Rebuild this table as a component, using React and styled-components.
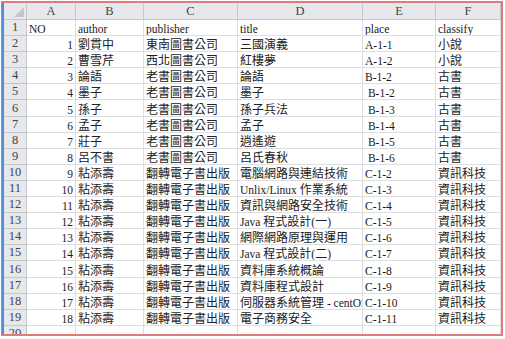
import React from 'react';
import styled, { createGlobalStyle } from 'styled-components';

const GlobalStyle = createGlobalStyle`
  html, body {
    margin: 0;
    padding: 0;
    background: #ffffff;
  }
`;

const Page = styled.div`
  width: 505px;
  height: 339px;
  padding: 1px 0 0 1px;
  box-sizing: border-box;
  overflow: hidden;
`;

const Frame = styled.div`
  width: 502px;
  height: 335px;
  box-sizing: border-box;
  border: 2px solid #e07a7c;
  border-left-width: 1px;
  overflow: hidden;
`;

const Sheet = styled.div`
  height: 100%;
  border-left: 2px solid #4d8fd6;
  display: grid;
  grid-template-columns: 23px 49px 68px 94px 125px 73px 1fr;
  grid-auto-rows: 16.1px;
  grid-template-rows: 17px;
  font-family: 'Liberation Serif', 'Noto Sans CJK TC', serif;
  color: #1a1a1a;
  overflow: hidden;
`;

const HeadCell = styled.div`
  background: #e6e8ec;
  border-right: 1px solid #c4c7cc;
  border-bottom: 1px solid #c4c7cc;
  color: #454545;
  font-size: 12.5px;
  display: flex;
  align-items: center;
  justify-content: center;
  box-sizing: border-box;
  position: relative;
`;

const Corner = styled(HeadCell)`
  &::after {
    content: '';
    position: absolute;
    right: 2px;
    bottom: 2px;
    border-style: solid;
    border-width: 0 0 10px 10px;
    border-color: transparent transparent #c3c6cb transparent;
  }
`;

const RowNum = styled(HeadCell)`
  font-size: 12.5px;
  align-items: flex-end;
  line-height: 15px;
`;

const Cell = styled.div`
  border-right: 1px solid #dcdee1;
  border-bottom: 1px solid #dcdee1;
  box-sizing: border-box;
  display: flex;
  align-items: flex-end;
  justify-content: ${(p) => (p.$num ? 'flex-end' : 'flex-start')};
  padding: 0 2px;
  white-space: pre;
  overflow: hidden;
  line-height: 15px;
  height: 100%;
  background: #ffffff;
`;

const Line = styled.span`
  display: block;
  line-height: 15px;
  height: 15px;
`;

const Latin = styled.span`
  font-family: 'Liberation Serif', serif;
  font-size: 11.5px;
  line-height: 15px;
`;

const Cjk = styled.span`
  font-family: 'Noto Sans CJK TC', sans-serif;
  font-size: 12px;
  line-height: 15px;
  color: #222;
`;

const letters = ['A', 'B', 'C', 'D', 'E', 'F'];

const rows = [
  ['NO', 'author', 'publisher', 'title', 'place', 'classify'],
  ['1', '劉貫中', '東南圖書公司', '三國演義', 'A-1-1', '小說'],
  ['2', '曹雪芹', '西北圖書公司', '紅樓夢', 'A-1-2', '小說'],
  ['3', '論語', '老書圖書公司', '論語', 'B-1-2', '古書'],
  ['4', '墨子', '老書圖書公司', '墨子', ' B-1-2', '古書'],
  ['5', '孫子', '老書圖書公司', '孫子兵法', ' B-1-3', '古書'],
  ['6', '孟子', '老書圖書公司', '孟子', ' B-1-4', '古書'],
  ['7', '莊子', '老書圖書公司', '逍遙遊', ' B-1-5', '古書'],
  ['8', '呂不書', '老書圖書公司', '呂氏春秋', ' B-1-6', '古書'],
  ['9', '粘添壽', '翻轉電子書出版', '電腦網路與連結技術', 'C-1-2', '資訊科技'],
  ['10', '粘添壽', '翻轉電子書出版', 'Unlix/Linux 作業系統', 'C-1-3', '資訊科技'],
  ['11', '粘添壽', '翻轉電子書出版', '資訊與網路安全技術', 'C-1-4', '資訊科技'],
  ['12', '粘添壽', '翻轉電子書出版', 'Java 程式設計(一)', 'C-1-5', '資訊科技'],
  ['13', '粘添壽', '翻轉電子書出版', '網際網路原理與運用', 'C-1-6', '資訊科技'],
  ['14', '粘添壽', '翻轉電子書出版', 'Java 程式設計(二)', 'C-1-7', '資訊科技'],
  ['15', '粘添壽', '翻轉電子書出版', '資料庫系統概論', 'C-1-8', '資訊科技'],
  ['16', '粘添壽', '翻轉電子書出版', '資料庫程式設計', 'C-1-9', '資訊科技'],
  ['17', '粘添壽', '翻轉電子書出版', '伺服器系統管理 - centOS', 'C-1-10', '資訊科技'],
  ['18', '粘添壽', '翻轉電子書出版', '電子商務安全', 'C-1-11', '資訊科技'],
  ['', '', '', '', '', ''],
];

const CJK = /[\u3000-\u9fff\uff00-\uffef]/;

// split text into CJK / latin runs so each gets its own size
function Text({ value }) {
  const parts = value.split(/([\u3000-\u9fff\uff00-\uffef]+)/).filter(Boolean);
  return (
    <Line>
      {parts.map((part, i) => (CJK.test(part) ? <Cjk key={i}>{part}</Cjk> : <Latin key={i}>{part}</Latin>))}
    </Line>
  );
}

export default function App() {
  return (
    <Page>
      <GlobalStyle />
      <Frame>
        <Sheet>
          <Corner />
          {letters.map((l) => (
            <HeadCell key={l}>{l}</HeadCell>
          ))}
          {rows.map((row, r) => (
            <React.Fragment key={r}>
              <RowNum>{r + 1}</RowNum>
              {row.map((v, c) => (
                <Cell key={c} $num={c === 0 && r > 0}>
                  <Text value={v} />
                </Cell>
              ))}
            </React.Fragment>
          ))}
        </Sheet>
      </Frame>
    </Page>
  );
}
